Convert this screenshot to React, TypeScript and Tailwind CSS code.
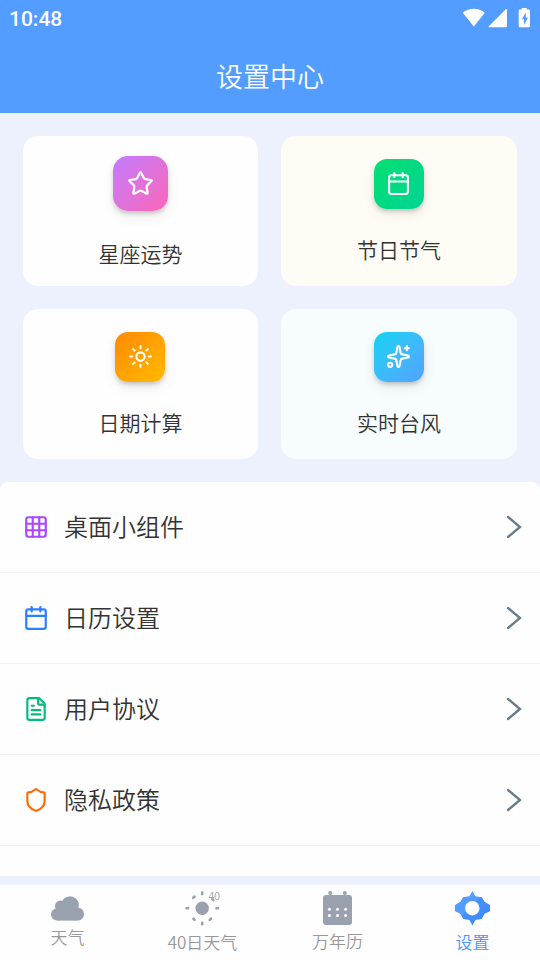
import React from 'react';
import { Calendar, FileText, Grid3x3, Shield, Sparkles, Star, Sun } from 'lucide-react';
import clsx from 'clsx';

const cards = [
  {
    title: '星座运势',
    icon: Star,
    card: 'bg-[#fefefe] pt-5',
    badge: 'mr-px size-[55px] rounded-[15px] from-[#c27aff] to-[#fb64b6]',
    iconClass: 'size-[27px]',
    label: 'mt-[27px]',
  },
  {
    title: '节日节气',
    icon: Calendar,
    card: 'bg-[#fffcf5] pt-[23px]',
    badge: 'size-[50px] rounded-[13px] from-[#05df72] to-[#00d492]',
    iconClass: 'mr-px mb-px size-[25px]',
    label: 'mt-[25px]',
  },
  {
    title: '日期计算',
    icon: Sun,
    card: 'bg-[#fefefe] pt-[23px]',
    badge: 'mr-px size-[50px] rounded-[13px] from-[#ff8904] to-[#ffba00]',
    iconClass: 'mb-px size-[25px]',
    label: 'mt-[25px]',
  },
  {
    title: '实时台风',
    icon: Sparkles,
    card: 'bg-[#f7fcff] pt-[23px]',
    badge: 'size-[50px] rounded-[13px] from-[#00d3f2] to-[#51a2ff]',
    iconClass: 'mr-px mb-px size-[25px]',
    label: 'mt-[25px]',
  },
];

const rows = [
  { title: '桌面小组件', icon: Grid3x3, color: 'text-[#ad46ff]' },
  { title: '日历设置', icon: Calendar, color: 'text-[#2b7fff]' },
  { title: '用户协议', icon: FileText, color: 'text-[#00bc7d]' },
  { title: '隐私政策', icon: Shield, color: 'text-[#ff6900]' },
];

const StatusBar = () => (
  <div className="flex h-[38px] items-center justify-between pl-[9px] pr-[10px]">
    <span className="font-[Roboto] text-[21px] leading-none font-medium">10:48</span>
    <svg className="mb-[2px] h-[20px] w-[68px]" viewBox="0 0 68 20" fill="currentColor">
      <path d="M0.7 4.7C6.5 -0.7 17 -0.7 22.8 4.7L11.8 18.4Z" />
      <path d="M45 1.6V18.1a1.2 1.2 0 0 1-1.2 1.2H27.5a.7.7 0 0 1-.5-1.3L43.8 1.3Q45 .5 45 1.6Z" />
      <path
        fillRule="evenodd"
        d="M59.8 0h5v1.5h2q1.2 0 1.2 1.2V18.1q0 1.2-1.2 1.2h-8.9q-1.2 0-1.2-1.2V2.7q0-1.2 1.2-1.2h1.9ZM63.8 4.5l-4 6.8h2.2v5.6l4-7.4h-2.2Z"
      />
    </svg>
  </div>
);

const CloudIcon = () => (
  <svg className="h-[25px] w-[33px]" viewBox="0 0 33 25" fill="#99a1af">
    <circle cx="19" cy="9" r="8.8" />
    <circle cx="9.4" cy="10" r="5.4" />
    <circle cx="6.2" cy="18.4" r="6.2" />
    <circle cx="26.4" cy="18" r="6.6" />
    <path d="M6 10H26V24.6H6Z" />
  </svg>
);

const FortyDaysIcon = () => (
  <span className="relative">
    <svg className="h-[35px] w-[35px]" viewBox="0 0 35 35" fill="#99a1af" stroke="#99a1af">
      <circle cx="17.2" cy="17.3" r="6.7" stroke="none" />
      <path
        strokeWidth="2.6"
        strokeLinecap="round"
        d="M17.2 1.5v1.6M17.2 31.7v1.6M1.5 17.3h1.6M31.4 17.3h1.6M8.2 6.8l1.4-1.2M8.4 27.6l1.2 1.2M26 27.6l-1.2 1.2M27.4 8.2l1 1"
      />
    </svg>
    <span className="absolute -top-[1px] right-0 font-['Open_Sans'] text-[10px] leading-[12px] font-medium text-[#99a1af]">
      40
    </span>
  </span>
);

const AlmanacIcon = () => (
  <svg className="h-[35px] w-[29px]" viewBox="0 0 29 35" fill="#99a1af">
    <rect y="4" width="29" height="30" rx="3" />
    <circle cx="7.2" cy="2" r="2" />
    <circle cx="21.8" cy="2" r="2" />
    <g fill="#fff">
      <circle cx="6.4" cy="18.2" r="1.5" />
      <circle cx="14.5" cy="18.2" r="1.5" />
      <circle cx="22.6" cy="18.2" r="1.5" />
      <circle cx="6.4" cy="24.4" r="1.5" />
      <circle cx="14.5" cy="24.4" r="1.5" />
      <circle cx="22.6" cy="24.4" r="1.5" />
    </g>
  </svg>
);

const GearIcon = () => (
  <svg className="size-[35px]" viewBox="0 0 35 35">
    <defs>
      <linearGradient id="gear" x1="0" y1="0" x2="1" y2="1">
        <stop offset="0" stopColor="#529dff" />
        <stop offset=".45" stopColor="#529dff" />
        <stop offset=".45" stopColor="#458ffc" />
        <stop offset="1" stopColor="#4088fa" />
      </linearGradient>
    </defs>
    <path
      fill="url(#gear)"
      fillRule="evenodd"
      d="M17.4 0l3 5.3 6.5 1 2.7 4.5L35 14v6.2l-5.4 2.5-2.9 5.3-6.3 1.1-3 5.4-3-5.4L8.2 28l-2.9-5.3L0 20.2V14l5.3-3.2L8 6.3l6.4-1ZM17.3 10a7.2 7.2 0 1 0 0 14.4 7.2 7.2 0 1 0 0-14.4Z"
    />
  </svg>
);

const tabs = [
  { title: '天气', icon: CloudIcon, className: 'pt-[11px] gap-[4px]' },
  { title: '40日天气', icon: FortyDaysIcon, className: 'pt-[6px] gap-[4px]' },
  { title: '万年历', icon: AlmanacIcon, className: 'pt-[6px] gap-[3px]' },
  { title: '设置', icon: GearIcon, className: 'pt-[6px] gap-[4px]', active: true },
];

export default function App() {
  return (
    <div className="flex h-[960px] w-[540px] flex-col overflow-hidden bg-[#edf1fe] font-['Noto_Sans_CJK_SC',sans-serif] font-[350] text-[#333]">
      <header className="h-[113px] shrink-0 bg-[#529dff] text-white">
        <StatusBar />
        <h1 className="flex h-[75px] items-center justify-center text-[27px] leading-none">设置中心</h1>
      </header>

      <section className="grid shrink-0 grid-cols-[235px_236px] gap-[23px] p-[23px]">
        {cards.map(({ title, icon: Icon, card, badge, iconClass, label }) => (
          <div key={title} className={clsx('flex h-[150px] flex-col items-center rounded-[15px]', card)}>
            <div
              className={clsx(
                'flex shrink-0 items-center justify-center bg-linear-to-br text-white shadow-[0_6px_13px_1px_rgba(0,0,0,0.06),0_3px_5px_-1px_rgba(0,0,0,0.22)]',
                badge,
              )}>
              <Icon className={iconClass} />
            </div>
            <span className={clsx('text-[21px] leading-[30px]', label)}>{title}</span>
          </div>
        ))}
      </section>

      <main className="h-[394px] shrink-0 rounded-t-[8px] bg-[#fefefe]">
        {rows.map(({ title, icon: Icon, color }) => (
          <div key={title} className="flex h-[91px] items-center border-b border-[#f1f2f3] pl-[23px] pr-[18px]">
            <Icon className={clsx('size-[26px]', color)} />
            <span className="mb-[2px] ml-[15px] flex-1 text-[24px] leading-none">{title}</span>
            <svg className="h-[24px] w-[16px]" viewBox="0 0 16 24" fill="none" stroke="#667b8b" strokeWidth="2.3">
              <path d="M2 2L14 12 2 22" strokeLinecap="round" />
            </svg>
          </div>
        ))}
      </main>

      <nav className="mt-[9px] grid flex-1 grid-cols-4 bg-[#fefefe]">
        {tabs.map(({ title, icon: Icon, className, active }) => (
          <div
            key={title}
            className={clsx('flex flex-col items-center', className, active ? 'text-[#4a95ff]' : 'text-[#999]')}>
            <Icon />
            <span className="text-[17px] leading-[24px]">{title}</span>
          </div>
        ))}
      </nav>
    </div>
  );
}
